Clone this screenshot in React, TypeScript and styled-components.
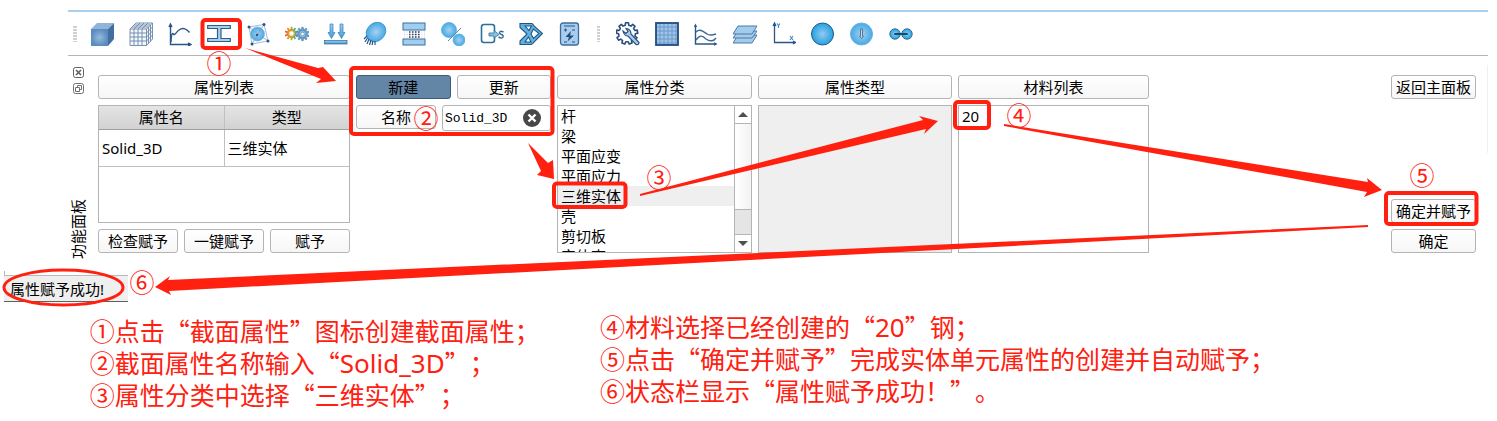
import React from "react";
import styled, { createGlobalStyle } from "styled-components";

const RED = "#ff2010";
const LINE = "#b4b4b4";
const NAVY = "#2b5588";
const UI_FONT = `"Noto Sans", "Noto Sans CJK SC", sans-serif`;
const CJK_FONT = `"Noto Sans CJK SC", sans-serif`;

const GlobalStyle = createGlobalStyle`
  * { box-sizing: border-box; }
  body { margin: 0; background: #fff; color: #000; font-family: ${UI_FONT}; font-size: 15px; }
  button, input { font-family: inherit; font-size: inherit; color: inherit; margin: 0; }
`;

const Page = styled.main`
  position: relative;
  padding-top: 10px;
  overflow: hidden;
`;

const Window = styled.section`
  margin: 0 9px 0 68px;
`;

const Toolbar = styled.div`
  display: flex;
  align-items: center;
  height: 46px;
  border-top: 2px solid #a9d0ee;
  border-bottom: 1px solid ${LINE};
`;

const Grip = styled.span<{ $wide?: boolean }>`
  flex: none;
  width: ${(p) => (p.$wide ? 19 : 14)}px;
  height: 16px;
  padding: 0 ${(p) => (p.$wide ? 8 : 5)}px;
  background: radial-gradient(circle at 1px 1px, #d0d0d0 1px, transparent 1px) 0 0 / 2px 3px content-box;
`;

const ToolButton = styled.button`
  flex: none;
  display: flex;
  align-items: center;
  justify-content: center;
  width: 39px;
  height: 32px;
  padding: 0;
  border: 0;
  background: none;
`;

const Body = styled.div`
  display: flex;
  padding-top: 9px;
`;

const DockBar = styled.aside`
  flex: none;
  display: flex;
  flex-direction: column;
  align-items: center;
  gap: 5px;
  width: 20px;
  padding-top: 2px;
  height: 194px;
`;

const DockButton = styled.button`
  display: flex;
  width: 11px;
  height: 11px;
  padding: 0;
  border: 0;
  background: none;
`;

const DockTitle = styled.span`
  margin-top: auto;
  writing-mode: vertical-rl;
  text-orientation: sideways;
  transform: rotate(180deg);
  line-height: 20px;
  white-space: nowrap;
`;

const Columns = styled.div`
  flex: 1;
  display: grid;
  grid-template-columns: 252fr 195fr 195fr 194fr 191fr 230fr 85fr;
  grid-template-rows: 100%;
  column-gap: 6px;
  margin: 10px 11px 0 10px;
  height: 178px;
`;

const Edge = styled.span`
  flex: none;
  width: 1px;
  height: 88px;
  background: #f0f0f0;
`;

const Column = styled.div`
  display: flex;
  flex-direction: column;
  gap: 6px;
  min-width: 0;
`;

const Row = styled.div`
  display: flex;
  gap: 6px;
`;

const PushButton = styled.button<{ $active?: boolean; $width?: number }>`
  flex: ${(p) => (p.$width ? `none` : `1 1 0`)};
  width: ${(p) => (p.$width ? `${p.$width}px` : "auto")};
  height: 24px;
  padding: 0;
  line-height: 20px;
  white-space: nowrap;
  border: 1px solid ${(p) => (p.$active ? "#3d5c7a" : LINE)};
  border-radius: 3px;
  background: ${(p) => (p.$active ? "#6385a6" : "linear-gradient(#fff, #f6f6f6)")};
`;

const Caption = styled(PushButton)`
  flex: none;
`;

const TableFrame = styled.div`
  flex: 1;
  border: 1px solid ${LINE};
`;

const Table = styled.table`
  width: 100%;
  table-layout: fixed;
  border-collapse: collapse;
  th {
    height: 23px;
    padding: 0;
    font-weight: 400;
    line-height: 20px;
    background: linear-gradient(#e4e4e4, #d2d2d2);
    border-bottom: 1px solid #a0a0a0;
  }
  td {
    height: 37px;
    padding: 0 3px;
    border-bottom: 1px solid #c0c0c0;
  }
  th + th, td + td {
    border-left: 1px solid #c0c0c0;
  }
`;

const NameField = styled.div`
  flex: 1;
  display: flex;
  align-items: center;
  height: 26px;
  padding: 0 9px 0 2px;
  border: 1px solid ${LINE};
  border-radius: 3px;
  min-width: 0;
`;

const NameInput = styled.input`
  flex: 1;
  min-width: 0;
  padding: 0;
  border: 0;
  outline: 0;
  background: none;
  font-family: "Liberation Mono", monospace;
  font-size: 13px;
`;

const ClearButton = styled.button`
  display: flex;
  padding: 0;
  border: 0;
  background: none;
`;

const ListBox = styled.div<{ $disabled?: boolean }>`
  flex: 1;
  display: flex;
  min-height: 0;
  border: 1px solid ${LINE};
  background: ${(p) => (p.$disabled ? "#efefef" : "#fff")};
`;

const List = styled.ul`
  flex: 1;
  margin: 0;
  padding: 0;
  list-style: none;
  overflow: hidden;
`;

const Item = styled.li<{ $selected?: boolean }>`
  height: 20px;
  padding: 0 3px;
  line-height: 20px;
  background: ${(p) => (p.$selected ? "#efefef" : "transparent")};
`;

const ScrollBar = styled.div`
  display: flex;
  flex-direction: column;
  width: 17px;
  border-left: 1px solid ${LINE};
`;

const ScrollStep = styled.button`
  display: flex;
  align-items: center;
  justify-content: center;
  flex: none;
  height: 17px;
  padding: 0;
  border: 0;
  background: #fff;
`;

const ScrollHandle = styled.div`
  flex: 1;
  border: solid ${LINE};
  border-width: 1px 0;
  background: linear-gradient(90deg, #fff, #f3f3f3);
`;

const ScrollTrack = styled.div`
  height: 25px;
  background: #e5e5e5;
  border-bottom: 1px solid ${LINE};
`;

const Actions = styled(Column)`
  grid-column: 7;
  & > :nth-child(2) { margin-top: auto; }
`;

const StatusBar = styled.div`
  position: relative;
  width: 124px;
  height: 27px;
  margin: 16px 0 0 4px;
  padding-left: 6px;
  line-height: 26px;
  white-space: nowrap;
  background: #efefef;
  border-top: 1px solid #b9b9b9;
  border-bottom: 1px solid #606060;
  &::before {
    content: "";
    position: absolute;
    left: 0;
    bottom: 100%;
    width: 1px;
    height: 5px;
    background: #b9b9b9;
  }
`;

const Notes = styled.div`
  display: grid;
  grid-template-columns: 510fr 897fr;
  align-items: end;
  padding: 8px 0 10px 6%;
  color: ${RED};
  font-family: ${CJK_FONT};
  font-size: 25px;
  line-height: 32px;
  text-spacing-trim: space-all;
`;

const NoteList = styled.div<{ $raised?: boolean }>`
  padding-bottom: ${(p) => (p.$raised ? 4 : 0)}px;
  white-space: nowrap;
  p { margin: 0; height: 32px; }
`;

const Latin = styled.span`
  font-family: "Noto Sans", sans-serif;
  font-size: 26px;
`;

const Overlay = styled.div`
  position: absolute;
  inset: 0;
  pointer-events: none;
`;

const Marks = styled.svg`
  display: block;
  width: 100%;
  height: 421px;
`;

const Marker = styled.span<{ $x: number; $y: number }>`
  position: absolute;
  left: ${(p) => (p.$x / 1497) * 100}%;
  top: ${(p) => p.$y}px;
  transform: translate(-50%, -50%);
  color: ${RED};
  font-family: ${CJK_FONT};
  font-size: 25px;
  line-height: 32px;
`;

const Ball = ({ cx, cy, r, stroke = "#2b7ab5" }: { cx: number; cy: number; r: number; stroke?: string }) => (
  <circle cx={cx} cy={cy} r={r} fill="url(#ball)" stroke={stroke} strokeWidth="0.8" />
);

const gear = (cx: number, cy: number, outer: number, inner: number, teeth: number) => {
  const points: string[] = [];
  for (let i = 0; i < teeth; i++) {
    [[-0.3, inner], [-0.2, outer], [0.2, outer], [0.3, inner]].forEach(([o, r]) => {
      const a = ((i + o) / teeth) * Math.PI * 2;
      points.push(`${(cx + Math.sin(a) * r).toFixed(2)},${(cy - Math.cos(a) * r).toFixed(2)}`);
    });
  }
  return points.join(" ");
};

const modelTools: [string, React.ReactNode][] = [
  ["几何", <>
    <path d="M1 7 L7 1 H24 L18 7 Z" fill="#8fb5d8" />
    <path d="M18 7 L24 1 V17 L18 24 Z" fill="#41709f" />
    <rect x="1" y="7" width="17" height="17" fill="url(#face)" />
  </>],
  ["网格", <>
    <path d="M1 7 L7 1 H23.500 V17 L17 23.500 H1 Z" fill="#f2f7fc" />
    <path d="M1 7H17.500V23.500H1Z M1 7L7 1H23.500L17.500 7 M23.500 1V17L17.500 23.500 M1 11H17.500M1 15H17.500M1 19H17.500M5 7V23.500M9 7V23.500M13 7V23.500M5 7L11 1M9 7L15 1M13 7L19 1M3 5H19.500V21.500M5 3H21.500V19.500M17.500 11L23.500 5M17.500 15L23.500 9M17.500 19L23.500 13" fill="none" stroke="#6b87a8" strokeWidth="0.9" />
  </>],
  ["曲线", <g fill="none" stroke={NAVY} strokeWidth="1.4">
    <path d="M2.500 3V22.500H22 M1 5L2.500 2L4 5 M20 21L23 22.500L20 24" />
    <path d="M3 20C3 14 4 10 5.500 12C7 14 8 10 11 8C15 5 19 7 21.500 10.500" />
  </g>],
  ["截面属性", <path d="M0.700 3.500H23.300V6.500H14V16.500H23.300V19.500H0.700V16.500H10.500V6.500H0.700Z" fill="#a9cfec" stroke="#2d5f86" strokeWidth="1.2" />],
  ["单元", <>
    <Ball cx={11.500} cy={12} r={7} stroke="#79b9e6" />
    <path d="M3 5L12 12L18 2.500M12 12L22 19M12 12L6 22" fill="none" stroke="#7da2c8" strokeWidth="0.8" />
    <path d="M3 5L18 2.500L22 19L6 22Z" fill="none" stroke="#8eabc9" strokeWidth="0.8" />
    <g fill={NAVY}><circle cx="3" cy="5" r="1.500" /><circle cx="18" cy="2.500" r="1.500" /><circle cx="22" cy="19" r="1.500" /><circle cx="6" cy="22" r="1.500" /><circle cx="11" cy="13" r="1.200" /></g>
  </>],
  ["分析", <>
    <polygon points={gear(6.500, 11.500, 6.800, 4.800, 10)} fill="url(#rainbow)" />
    <circle cx="6.500" cy="11.500" r="3" fill="#fff" stroke="#e0a030" strokeWidth="1.400" />
    <polygon points={gear(17.500, 12, 6.800, 5, 10)} fill="#6b9fc7" stroke="#427ca8" strokeWidth="0.500" />
    <circle cx="17.500" cy="12" r="3.600" fill="#9bc6e6" stroke="#427ca8" strokeWidth="0.600" />
    <circle cx="17.500" cy="12" r="1.800" fill="#fff" stroke="#427ca8" strokeWidth="0.600" />
  </>],
  ["载荷", <g fill="url(#bar)" stroke="#347fb6" strokeWidth="0.700">
    <path d="M6 2H9V10.500H11L7.500 16.500L4 10.500H6Z M16 2H19V10.500H21L17.500 16.500L14 10.500H16Z" />
    <rect x="0.500" y="18.500" width="22.500" height="3.500" stroke="#2b6593" />
  </g>],
  ["约束", <>
    <ellipse cx="13" cy="10" rx="10.500" ry="9" transform="rotate(-43 13 10)" fill="url(#ball)" stroke="#348fc9" strokeWidth="0.800" />
    <path d="M4 14L1 17M4.500 16L2 20M6 17L4 22M8 18L6.500 23M10 19L9 23M12 19V23" fill="none" stroke={NAVY} strokeWidth="1.200" />
  </>],
  ["接触", <>
    <rect x="1" y="1" width="22" height="7" fill="#a1ceef" stroke="#3d6c9b" />
    <rect x="1" y="17" width="22" height="6" fill="#a1ceef" stroke="#3d6c9b" />
    <path d="M2 10H23M2 12.500H23M2 15H23" stroke="#c7ccd2" strokeWidth="1" strokeDasharray="1 1.500" />
    <path d="M7 10H18M7 12.500H18M7 15H18" stroke="#263f5e" strokeWidth="1.400" strokeDasharray="1.500 1.500" />
  </>],
  ["连接", <>
    <Ball cx={8} cy={8} r={7.500} stroke="#55aee1" />
    <Ball cx={18} cy={18} r={6} stroke="#55aee1" />
    <path d="M7 19L20 6" stroke="#6f8193" strokeWidth="1" />
  </>],
  ["输出", <>
    <path d="M14.500 9V5Q14.500 2.500 12 2.500H4Q1.500 2.500 1.500 5V18Q1.500 20.500 4 20.500H12Q14.500 20.500 14.500 18V15" fill="none" stroke="#2d6f9b" strokeWidth="1.600" />
    <path d="M9 11H14V8.500L19 12.500L14 16V14H9Z" fill="#8ac0e6" stroke="#2d6f9b" strokeWidth="0.800" />
    <path d="M23.500 10Q20 8.500 19.500 10.500Q19.500 12 21.500 12.500Q23.500 13 23 15Q22 17 18.500 15" fill="none" stroke="#2d6f9b" strokeWidth="1.500" />
  </>],
  ["优化", <path fillRule="evenodd" d="M1 1.500H13Q14 2 15 4L23.500 11.500L15 20Q14 22 12 22.500H1V19L8 12L1 5.500Z M6 4L10 8.500L12.500 4Z M14.500 7L12 12L14.500 16.500L20 11.500Z M9.500 15L6 20H12Z" fill="#5eb2e4" stroke="#25557f" strokeWidth="1.100" />],
  ["计算", <>
    <rect x="2.500" y="1" width="18" height="22" rx="2.500" fill="#a8cdef" stroke="#3c6ba0" strokeWidth="1.300" />
    <path d="M6 4H17M6 8H9M7.500 6.500V9.500M14 8H17M6 20H9M14 20H17" stroke={NAVY} strokeWidth="1.200" />
    <path d="M13 9L7.500 15H11L9.500 19.500L16 13.500H12Z" fill="#224b7e" />
  </>],
];

const viewTools: [string, React.ReactNode][] = [
  ["设置", <>
    <polygon points={gear(11, 11.500, 10.800, 8.400, 9)} fill="#fff" stroke="#2b4f80" strokeWidth="1.600" strokeLinejoin="round" />
    <path d="M7 9Q8 14 12 14L20 22.500Q23 23 23 20.500L15 12Q15 7 10 6.500L12 9.500L10 11.500Z" fill="#a7cfed" stroke="#2b4f80" strokeWidth="1.200" />
  </>],
  ["表格", <>
    <rect x="1" y="1" width="22" height="22" fill="#9bc5e9" stroke="#234a7c" strokeWidth="1.800" />
    <path d="M5 2V22M9 2V22M13 2V22M17 2V22M21 2V22M2 5H22M2 9H22M2 13H22M2 17H22M2 21H22" stroke="#6791c2" strokeWidth="0.800" />
  </>],
  ["曲线图", <g fill="none" stroke="#416893" strokeWidth="1.400">
    <path d="M1.500 4V22H22M0.500 5L1.500 3L2.500 5M20 21L22 22L20 23" stroke={NAVY} />
    <path d="M2 10C6 6 10 10 13 12C16 14 19 13 22 12M2 18C6 12 9 14 12 17C16 20 20 19 22 16" />
  </g>],
  ["图层", <g fill="#a3ccec" stroke="#4e79a6" strokeWidth="1">
    <path d="M5 13H24L19 21H0Z" /><path d="M5 9H24L19 16H0Z" /><path d="M5 4H24L19 12H0Z" />
  </g>],
  ["坐标系", <>
    <path d="M2.500 2V20.500H23M1 4L2.500 1L4 4M21 19L23.500 20.500L21 22" fill="none" stroke={NAVY} strokeWidth="1.300" />
    <path d="M5 1.500L6.500 3.500L8 1.500M6.500 3.500V6M18 14L21 18M21 14L18 18" fill="none" stroke="#3c91d2" strokeWidth="1.200" />
  </>],
  ["球体", <circle cx="11.500" cy="12" r="11" fill="url(#disc)" stroke="#275983" />],
  ["方向", <>
    <circle cx="11.500" cy="12" r="11" fill="url(#ball)" stroke="#63b3e5" />
    <path d="M10.500 7H12.500V14H13.500L11.500 16.500L9.500 14H10.500Z" fill="#b9daf2" stroke="#486c8d" strokeWidth="0.900" />
  </>],
  ["节点", <>
    <circle cx="6" cy="12" r="5.200" fill="url(#disc)" stroke="#2f7099" />
    <circle cx="18" cy="12" r="5.200" fill="url(#disc)" stroke="#2f7099" />
    <path d="M6 12H18" stroke="#1f496c" strokeWidth="2" strokeLinecap="round" />
  </>],
];

const Tool = ({ name, children }: { name: string; children: React.ReactNode }) => (
  <ToolButton aria-label={name}>
    <svg width="24" height="24" viewBox="0 0 24 24">{children}</svg>
  </ToolButton>
);

const Defs = styled.svg`
  position: absolute;
`;

const Gradients = () => (
  <Defs width="0" height="0">
    <defs>
      <radialGradient id="ball"><stop offset="0" stopColor="#a9d0f0" /><stop offset="1" stopColor="#43aae4" /></radialGradient>
      <radialGradient id="disc"><stop offset="0" stopColor="#92caf2" /><stop offset="1" stopColor="#25a1e0" /></radialGradient>
      <radialGradient id="face"><stop offset="0" stopColor="#94bbdf" /><stop offset="1" stopColor="#5b8cbd" /></radialGradient>
      <linearGradient id="bar" x1="0" y1="0" x2="0" y2="1"><stop offset="0" stopColor="#a0cff0" /><stop offset="1" stopColor="#3b9ad8" /></linearGradient>
      <linearGradient id="rainbow"><stop offset="0" stopColor="#e8452c" /><stop offset="0.350" stopColor="#f0a02c" /><stop offset="0.600" stopColor="#5fb84a" /><stop offset="1" stopColor="#4a9ed0" /></linearGradient>
    </defs>
  </Defs>
);

const categories = ["杆", "梁", "平面应变", "平面应力", "三维实体", "壳", "剪切板", "实体壳"];

const markers: [string, number, number][] = [
  ["①", 219, 62], ["②", 426, 117], ["③", 659, 176],
  ["④", 1019, 114], ["⑤", 1422, 174], ["⑥", 142, 281],
];

const arrows = [
  "245,48 318,68 323,67 336,81 316,83 321,79",
  "528,143 548,163 553,160 554,179 537,175 541,171",
  "640,194 640,196 926,129 924,134 938,121 919,116 923,120",
  "1004,124 1368,182 1367,178 1382,190 1364,197 1367,192 1004,126",
  "1368,225 168,280 170,276 155,287 171,295 169,291 1368,227",
];

const frames = [
  [202.500, 20, 37.500, 28], [351, 68, 201.500, 66], [554, 183.500, 71.500, 23.500],
  [955, 102, 34, 26], [1386, 193, 90.500, 31],
];

export default function App() {
  return (
    <Page>
      <GlobalStyle />
      <Gradients />
      <Window>
        <Toolbar role="toolbar">
          <Grip />
          {modelTools.map(([name, art]) => <Tool key={name} name={name}>{art}</Tool>)}
          <Grip $wide />
          {viewTools.map(([name, art]) => <Tool key={name} name={name}>{art}</Tool>)}
        </Toolbar>
        <Body>
          <DockBar>
            <DockButton aria-label="关闭">
              <svg width="11" height="11" viewBox="0 0 11 11" fill="none" stroke="#606060">
                <rect x="0.500" y="0.500" width="10" height="10" rx="2" />
                <path d="M3 3L8 8M8 3L3 8" strokeWidth="1.600" />
              </svg>
            </DockButton>
            <DockButton aria-label="浮动">
              <svg width="11" height="11" viewBox="0 0 11 11" fill="none" stroke="#707070">
                <rect x="0.500" y="0.500" width="10" height="10" rx="2" />
                <path d="M4.500 4.500V2.500H8.500V6.500H6.500M2.500 4.500H6.500V8.500H2.500Z" />
              </svg>
            </DockButton>
            <DockTitle>功能面板</DockTitle>
          </DockBar>
          <Columns>
            <Column>
              <Caption>属性列表</Caption>
              <TableFrame>
                <Table>
                  <thead><tr><th>属性名</th><th>类型</th></tr></thead>
                  <tbody><tr><td>Solid_3D</td><td>三维实体</td></tr></tbody>
                </Table>
              </TableFrame>
              <Row>
                <PushButton>检查赋予</PushButton>
                <PushButton>一键赋予</PushButton>
                <PushButton>赋予</PushButton>
              </Row>
            </Column>
            <Column>
              <Row>
                <PushButton $active>新建</PushButton>
                <PushButton>更新</PushButton>
              </Row>
              <Row>
                <PushButton $width={80}>名称</PushButton>
                <NameField>
                  <NameInput aria-label="名称" defaultValue="Solid_3D" />
                  <ClearButton aria-label="清除">
                    <svg width="18" height="18" viewBox="0 0 18 18">
                      <circle cx="9" cy="9" r="9" fill="#484848" />
                      <path d="M5.500 5.500L12.500 12.500M12.500 5.500L5.500 12.500" stroke="#fff" strokeWidth="2.400" />
                    </svg>
                  </ClearButton>
                </NameField>
              </Row>
            </Column>
            <Column>
              <Caption>属性分类</Caption>
              <ListBox>
                <List role="listbox" aria-label="属性分类">
                  {categories.map((c) => (
                    <Item key={c} role="option" aria-selected={c === "三维实体"} $selected={c === "三维实体"}>{c}</Item>
                  ))}
                </List>
                <ScrollBar>
                  <ScrollStep aria-label="向上"><svg width="10" height="5"><path d="M0 5L5 0L10 5Z" fill="#505050" /></svg></ScrollStep>
                  <ScrollHandle />
                  <ScrollTrack />
                  <ScrollStep aria-label="向下"><svg width="10" height="5"><path d="M0 0L5 5L10 0Z" fill="#505050" /></svg></ScrollStep>
                </ScrollBar>
              </ListBox>
            </Column>
            <Column>
              <Caption>属性类型</Caption>
              <ListBox $disabled />
            </Column>
            <Column>
              <Caption>材料列表</Caption>
              <ListBox>
                <List role="listbox" aria-label="材料列表">
                  <Item role="option">20</Item>
                </List>
              </ListBox>
            </Column>
            <Actions>
              <Caption>返回主面板</Caption>
              <Caption>确定并赋予</Caption>
              <Caption>确定</Caption>
            </Actions>
          </Columns>
          <Edge />
        </Body>
      </Window>
      <StatusBar role="status">属性赋予成功!</StatusBar>
      <Notes>
        <NoteList>
          <p>①点击“截面属性”图标创建截面属性；</p>
          <p>②截面属性名称输入“<Latin>Solid_3D</Latin>”；</p>
          <p>③属性分类中选择“三维实体”；</p>
        </NoteList>
        <NoteList $raised>
          <p>④材料选择已经创建的“<Latin>20</Latin>”钢；</p>
          <p>⑤点击“确定并赋予”完成实体单元属性的创建并自动赋予；</p>
          <p>⑥状态栏显示“属性赋予成功！”。</p>
        </NoteList>
      </Notes>
      <Overlay>
        <Marks viewBox="0 0 1497 421" preserveAspectRatio="none">
          {arrows.map((points) => <polygon key={points} points={points} fill={RED} />)}
          <g fill="none" stroke={RED} strokeWidth="4">
            {frames.map(([x, y, w, h]) => <rect key={x} x={x} y={y} width={w} height={h} rx="3" />)}
            <ellipse cx="63.500" cy="287.500" rx="59.500" ry="17.500" strokeWidth="3" />
          </g>
        </Marks>
        {markers.map(([label, x, y]) => <Marker key={label} $x={x} $y={y}>{label}</Marker>)}
      </Overlay>
    </Page>
  );
}
